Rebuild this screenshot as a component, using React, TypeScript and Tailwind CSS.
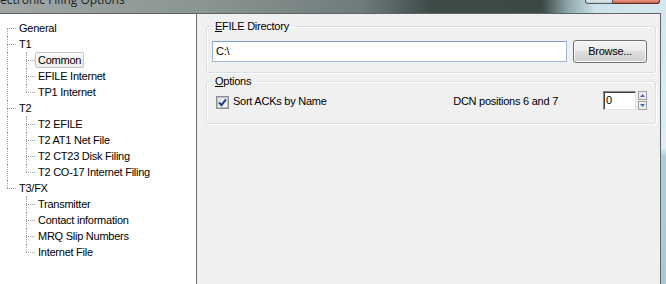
import type { ReactNode } from 'react'

type TreeNode = { label: string; selected?: boolean; children?: TreeNode[] }

const tree: TreeNode[] = [
  { label: 'General' },
  {
    label: 'T1',
    children: [{ label: 'Common', selected: true }, { label: 'EFILE Internet' }, { label: 'TP1 Internet' }],
  },
  {
    label: 'T2',
    children: [
      { label: 'T2 EFILE' },
      { label: 'T2 AT1 Net File' },
      { label: 'T2 CT23 Disk Filing' },
      { label: 'T2 CO-17 Internet Filing' },
    ],
  },
  {
    label: 'T3/FX',
    children: [
      { label: 'Transmitter' },
      { label: 'Contact information' },
      { label: 'MRQ Slip Numbers' },
      { label: 'Internet File' },
    ],
  },
]

type Row = { label: string; selected?: boolean; guides: boolean[]; first: boolean; last: boolean; depth: number }

function flatten(nodes: TreeNode[], guides: boolean[] = [], out: Row[] = []) {
  nodes.forEach((n, i) => {
    const last = i === nodes.length - 1
    out.push({ label: n.label, selected: n.selected, guides, first: i === 0, last, depth: guides.length })
    if (n.children) flatten(n.children, [...guides, !last], out)
  })
  return out
}

const rows = flatten(tree)

function TreeRow({ row }: { row: Row }) {
  const stem =
    row.first && row.depth === 0 ? 'top-1/2 bottom-0' : row.last ? 'top-0 h-1/2' : 'top-0 bottom-0'
  return (
    <div className="flex h-4 items-center">
      {row.guides.map((g, i) => (
        <span key={i} className="relative h-4 w-[19px] shrink-0">
          {g && <span className="absolute left-[7px] top-0 bottom-0 border-l border-dotted border-[#a0a0a0]" />}
        </span>
      ))}
      <span className="relative h-4 w-4 shrink-0">
        <span className={`absolute left-[7px] border-l border-dotted border-[#a0a0a0] ${stem}`} />
        <span className="absolute left-[7px] right-0 top-1/2 border-t border-dotted border-[#a0a0a0]" />
      </span>
      <span
        className={
          row.selected
            ? 'flex h-4 items-center rounded-[2px] border border-[#c4c4c4] bg-[linear-gradient(#fbfbfb,#ececec)] px-[2px]'
            : 'flex h-4 items-center border border-transparent px-[2px]'
        }
      >
        {row.label}
      </span>
    </div>
  )
}

function GroupBox({ title, accel, className, children }: { title: string; accel: string; className: string; children: ReactNode }) {
  return (
    <fieldset
      className={`mx-0 rounded-[3px] border border-[#d5dfe5] pl-[5px] shadow-[inset_1px_1px_0_#fff,1px_1px_0_#fff] ${className}`}
    >
      <legend className="ml-[1px] pl-[2px] pr-[5px] leading-[13px]">
        <span className="underline underline-offset-[1px]">{accel}</span>
        {title}
      </legend>
      {children}
    </fieldset>
  )
}

export default function App() {
  return (
    <div className="flex h-[284px] w-[666px] overflow-hidden bg-[#f0f0f0] font-['Liberation_Sans',Arial,sans-serif] text-[11px] tracking-[-0.25px] text-black">
      <div className="flex w-[661px] flex-col">
        {/* title bar, only the bottom of it is in view */}
        <div className="flex h-[13px] shrink-0 justify-between overflow-hidden bg-[linear-gradient(90deg,#a0a7a6_0%,#8b9594_30%,#6f7b7a_55%,#3e4b49_65%,#3b4846_82%,#8fa7ab_86%,#cde2e9_90%,#d4e8ee_100%)]">
          <span className="-mt-[8px] whitespace-nowrap font-['Open_Sans',sans-serif] text-[12px] leading-[16px] tracking-normal text-[#1b1f1f]">
            ectronic Filing Options
          </span>
          <div className="mr-[1px] flex h-[4px]">
            <span className="w-[28px] rounded-bl-[3px] border border-t-0 border-[#4d5a5e] bg-[linear-gradient(#dfe7ea,#c3ced3)]" />
            <span className="w-[47px] rounded-br-[3px] border border-t-0 border-l-0 border-[#5b2b22] bg-[linear-gradient(#e69a86,#cf6048)]" />
          </div>
        </div>

        <div className="flex flex-1 border-t border-r border-[#5f6566]">
          <div className="w-[197px] shrink-0 border-r border-[#6b6e70] bg-white pt-[6px]">
            {rows.map((r) => (
              <TreeRow key={r.label} row={r} />
            ))}
          </div>

          <div className="flex-1 pt-[6px] pl-[9px] pr-[4px]">
            <GroupBox title="FILE Directory" accel="E" className="h-[53px]">
              <div className="mt-[7px] flex items-center pr-[8px]">
                <div className="flex h-[21px] flex-1 items-center border border-[#9cb4d0] border-t-[#7b9ec5] bg-white pl-[3px]">
                  C:\
                </div>
                <button className="ml-[6px] h-[23px] w-[74px] rounded-[3px] border border-[#707070] bg-[linear-gradient(#f3f3f3_0%,#ebebeb_49%,#dddddd_50%,#cfcfcf_100%)] shadow-[inset_0_0_0_1px_#fcfcfc]">
                  Browse...
                </button>
              </div>
            </GroupBox>

            <GroupBox title="ptions" accel="O" className="mt-[2px] h-[49px]">
              <div className="mt-[3px] flex items-center pr-[8px]">
                <span className="ml-[4px] mt-[3px] flex h-[13px] w-[13px] items-center justify-center border border-[#8e8f8f] bg-white">
                  <span className="relative flex h-[11px] w-[11px] items-center justify-center border border-[#b5bfcc] bg-[linear-gradient(135deg,#dce4ee,#f5f7fa)]">
                    <svg width="9" height="9" viewBox="0 0 9 9" className="absolute">
                      <path d="M1 4.5 L3.5 7.2 L8 1.3" fill="none" stroke="#1f3c7a" strokeWidth="1.9" />
                    </svg>
                  </span>
                </span>
                <span className="ml-[4px] mt-[2px]">Sort ACKs by Name</span>
                <span className="flex-1" />
                <span className="mt-[1px]">DCN positions 6 and 7</span>
                <div className="ml-[45px] flex h-[19px] w-[33px] items-center border border-[#8a8a8a] border-b-[#e3e3e3] border-r-[#e3e3e3] bg-white pl-[2px] shadow-[inset_1px_1px_0_#404040]">
                  0
                </div>
                <div className="ml-[2px] flex h-[19px] flex-col gap-[1px]">
                  <span className="flex h-[9px] w-[9px] items-center justify-center border border-[#a3a3a3] bg-[#ececec]">
                    <svg width="5" height="3" viewBox="0 0 5 3">
                      <path d="M0 3 L2.5 0 L5 3 Z" fill="#4c6cb3" />
                    </svg>
                  </span>
                  <span className="flex h-[9px] w-[9px] items-center justify-center border border-[#a3a3a3] bg-[#ececec]">
                    <svg width="5" height="3" viewBox="0 0 5 3">
                      <path d="M0 0 L2.5 3 L5 0 Z" fill="#4c6cb3" />
                    </svg>
                  </span>
                </div>
              </div>
            </GroupBox>
          </div>
        </div>
      </div>

      {/* aero frame edge */}
      <div className="w-[5px] shrink-0 bg-[linear-gradient(#d3e7ee_0%,#e0eef3_52%,#aacfd8_55%,#a5cbd4_100%)]" />
    </div>
  )
}
